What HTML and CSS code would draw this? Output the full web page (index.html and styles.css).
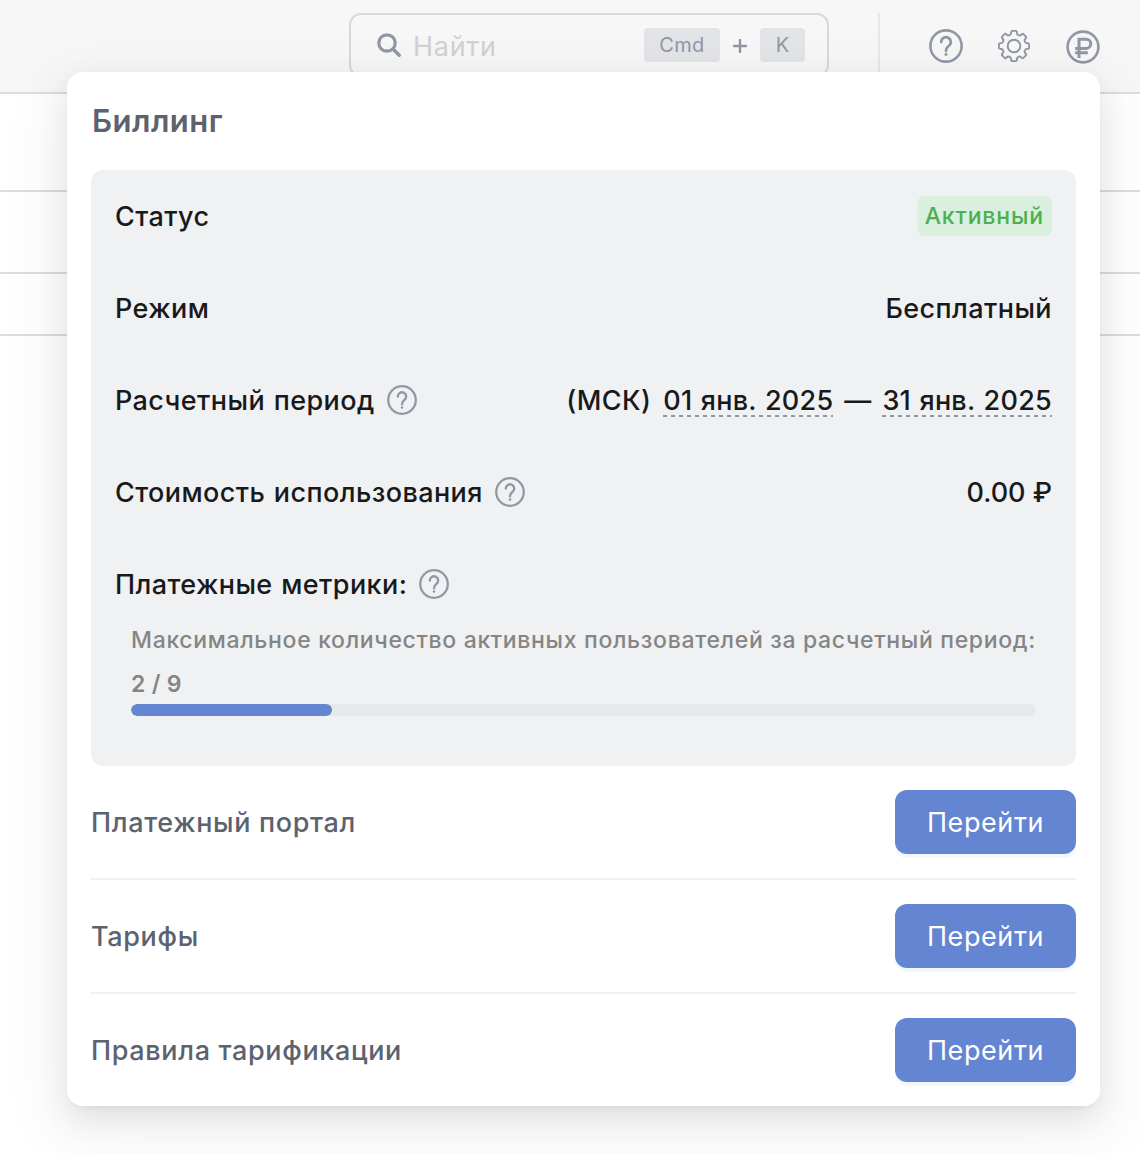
FILE: index.html
```html
<!DOCTYPE html>
<html lang="ru">
<head>
<meta charset="utf-8">
<title>Биллинг</title>
<link rel="stylesheet" href="styles.css">
</head>
<body>
<svg class="defs" width="0" height="0">
  <symbol id="help" viewBox="0 0 32 32">
    <circle cx="16" cy="16" r="14.7" fill="none" stroke="currentColor" stroke-width="2.4"/>
    <path d="M11.5 12.300a4.500 4.500 0 1 1 7 3.700c-1.800 1.300-2.500 2.200-2.500 4.600" fill="none" stroke="currentColor" stroke-width="2.500" stroke-linecap="round"/>
    <circle cx="16" cy="24" r="1.400" fill="currentColor"/>
  </symbol>
  <path id="tooth" d="M-2.900-12.900V-13.600Q-2.900-15.100-1.400-15.100H1.400Q2.900-15.100 2.900-13.600V-12.900C2.900-11 5.770-9.870 7.070-11.170"/>
</svg>
<div class="page">
  <header class="topbar">
    <div class="search">
      <svg class="search-icon" width="26" height="26" viewBox="0 0 26 26" fill="none" stroke="currentColor"><circle cx="11" cy="11" r="8.200" stroke-width="3.200"/><path d="M17 17l6.200 6.200" stroke-width="3.400" stroke-linecap="round"/></svg>
      <span class="placeholder">Найти</span>
      <kbd class="key key-cmd">Cmd</kbd>
      <svg class="plus" width="14" height="14" viewBox="0 0 14 14" stroke="currentColor" stroke-width="2.400" stroke-linecap="round"><path d="M7 1v12M1 7h12"/></svg>
      <kbd class="key key-k">K</kbd>
    </div>
    <div class="divider"></div>
    <nav class="actions">
      <svg class="act-help" width="34" height="34"><use href="#help"/></svg>
      <svg class="act-gear" width="32" height="32" viewBox="-16 -16 32 32" fill="none" stroke="currentColor" stroke-width="1.900" stroke-linecap="round">
        <use href="#tooth"/><use href="#tooth" transform="rotate(45)"/><use href="#tooth" transform="rotate(90)"/><use href="#tooth" transform="rotate(135)"/>
        <use href="#tooth" transform="rotate(180)"/><use href="#tooth" transform="rotate(225)"/><use href="#tooth" transform="rotate(270)"/><use href="#tooth" transform="rotate(315)"/>
        <circle r="6.300"/>
      </svg>
      <svg class="act-ruble" width="34" height="34" viewBox="0 0 34 34" fill="none" stroke="currentColor"><circle cx="17" cy="17" r="15.400" stroke-width="2.600"/><path d="M13 28V9.200h7.200a4.600 4.600 0 0 1 0 9.200H9.200M9.200 22.800h12.600" stroke-width="3"/></svg>
    </nav>
  </header>
  <div class="line-row row-a"></div>
  <div class="line-row row-b"></div>
  <div class="line-row row-c"></div>
</div>

<section class="popover">
  <h1 class="title">Биллинг</h1>
  <div class="summary">
    <div class="item"><span>Статус</span><span class="tag">Активный</span></div>
    <div class="item"><span>Режим</span><span>Бесплатный</span></div>
    <div class="item">
      <span class="label">Расчетный период<svg class="hint" width="30" height="30"><use href="#help"/></svg></span>
      <span class="period"><span>(МСК)</span><span class="date">01 янв. 2025</span><span class="dash">—</span><span class="date">31 янв. 2025</span></span>
    </div>
    <div class="item"><span class="label">Стоимость использования<svg class="hint" width="30" height="30"><use href="#help"/></svg></span><span class="cost">0.00 ₽</span></div>
    <div class="item"><span class="label">Платежные метрики:<svg class="hint" width="30" height="30"><use href="#help"/></svg></span></div>
    <div class="metric">
      <div class="metric-name">Максимальное количество активных пользователей за расчетный период:</div>
      <div class="metric-value">2 / 9</div>
      <div class="progress"><div class="progress-fill" style="width:22.222%"></div></div>
    </div>
  </div>
  <div class="link-row"><span>Платежный портал</span><button class="btn">Перейти</button></div>
  <div class="link-row"><span>Тарифы</span><button class="btn">Перейти</button></div>
  <div class="link-row"><span>Правила тарификации</span><button class="btn">Перейти</button></div>
</section>
</body>
</html>
```

FILE: styles.css
```css
* { box-sizing: border-box; }
body {
  margin: 0;
  height: 1154px;
  position: relative;
  overflow: hidden;
  background: #fff;
  font-family: Inter, "Liberation Sans", sans-serif;
  font-size: 27px;
  color: #18191b;
}
svg { display: block; flex: none; }
.defs { position: absolute; }

.topbar {
  height: 94px;
  display: flex;
  align-items: flex-start;
  padding: 13px 40px 0 349px;
  background: #f7f7f7;
  border-bottom: 2px solid #dcdcdc;
}
.search {
  width: 480px;
  height: 64px;
  display: flex;
  align-items: center;
  padding: 0 22px 0 25px;
  border: 2px solid #d9d9d9;
  border-radius: 12px;
  color: #9197a5;
}
.placeholder {
  margin-left: 11px;
  margin-right: auto;
  padding-top: 2px;
  color: #d0d1d5;
  letter-spacing: .7px;
}
.key {
  height: 34px;
  line-height: 34px;
  border-radius: 4px;
  background: #e3e4e8;
  font-family: inherit;
  font-size: 20px;
  text-align: center;
}
.key-cmd { width: 76px; letter-spacing: .3px; }
.plus { margin: 2px 13px 0; }
.key-k { width: 45px; }
.divider {
  width: 2px;
  height: 64px;
  margin-left: 49px;
  background: #e7e7e7;
}
.actions {
  display: flex;
  margin-left: auto;
  padding-top: 16px;
  color: #9197a5;
}
.act-gear { margin: 1px 36px 0 35px; }
.act-ruble { margin-top: 1px; }

.line-row { border-bottom: 2px solid #dcdcdc; }
.row-a { height: 98px; }
.row-b { height: 82px; }
.row-c { height: 62px; }

.popover {
  position: absolute;
  left: 67px;
  top: 72px;
  width: 1033px;
  height: 1034px;
  padding: 24px;
  border-radius: 16px;
  background: #fff;
  color: #5d626f;
  box-shadow: 0 12px 32px rgba(0,0,0,.08), 0 6px 12px -8px rgba(0,0,0,.12), 0 18px 56px 16px rgba(0,0,0,.05);
}
.title {
  margin: 0;
  height: 74px;
  padding-left: 1px;
  line-height: 50px;
  font-size: 31px;
  letter-spacing: .5px;
  font-weight: 600;
  color: #5d626f;
}
.summary {
  height: 596px;
  padding: 24px;
  border-radius: 12px;
  background: #f0f1f3;
  color: #18191b;
  font-weight: 500;
}
.item {
  height: 44px;
  margin-bottom: 48px;
  display: flex;
  align-items: center;
  justify-content: space-between;
  letter-spacing: .41px;
  word-spacing: 1px;
}
.item:nth-child(5) { margin-bottom: 0; }
.label { display: flex; align-items: center; }
.hint { margin-left: 12px; color: #9197a5; }
.cost { letter-spacing: 0; word-spacing: 0; }
.tag {
  height: 40px;
  line-height: 40px;
  padding: 0 8px;
  border-radius: 8px;
  background: #d9f0de;
  color: #4caf50;
  font-size: 23px;
  letter-spacing: .85px;
}
.period { display: flex; gap: 12px; line-height: 34px; padding-top: 1px; }
.date {
  height: 33px;
  letter-spacing: .25px;
  background: repeating-linear-gradient(90deg, #9197a5 0 4px, transparent 4px 8px) 0 100% / 100% 2px no-repeat;
}
.dash { width: 25px; display: flex; justify-content: center; }
.metric {
  padding: 12px 16px 0;
  color: #858585;
  font-size: 23px;
  letter-spacing: .67px;
}
.metric-name { height: 44px; line-height: 44px; white-space: nowrap; }
.metric-value { height: 42px; line-height: 44px; font-weight: 600; letter-spacing: .3px; }
.progress { height: 12px; border-radius: 6px; background: #e7e8ea; overflow: hidden; }
.progress-fill { height: 12px; border-radius: 6px; background: #6486d2; }

.link-row {
  height: 114px;
  display: flex;
  align-items: center;
  justify-content: space-between;
  border-bottom: 2px solid #f0f0f0;
  font-weight: 450;
  letter-spacing: .65px;
}
.link-row:last-child { border-bottom: 0; height: 112px; }
.btn {
  width: 181px;
  height: 64px;
  padding: 0;
  border: 0;
  border-radius: 12px;
  background: #6486d2;
  box-shadow: 0 4px 0 #f3f7fe;
  color: #fff;
  font: 400 27px Inter, "Liberation Sans", sans-serif;
  letter-spacing: .6px;
}
```
